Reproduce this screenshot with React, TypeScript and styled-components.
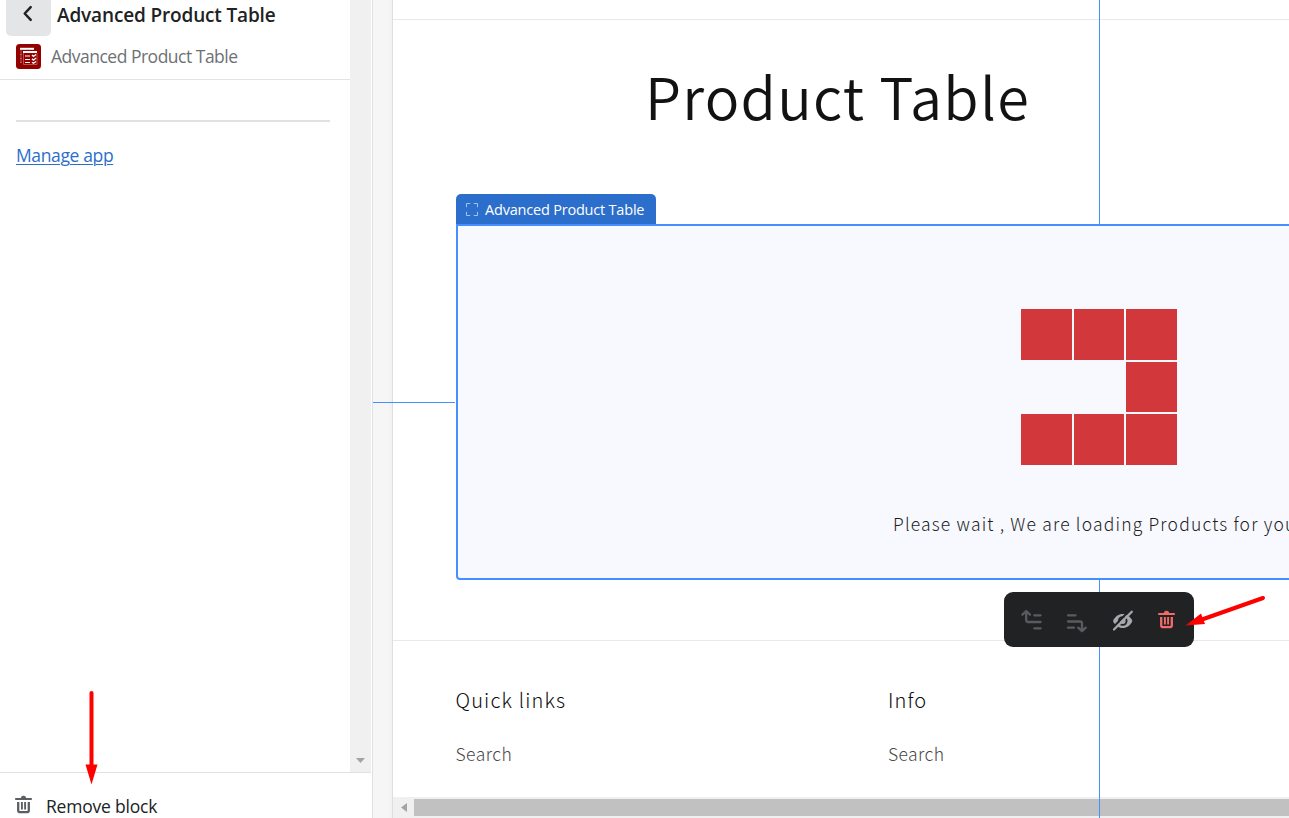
import React from "react";
import styled, { createGlobalStyle } from "styled-components";

const GlobalStyle = createGlobalStyle`
  * { box-sizing: border-box; }
  body { margin: 0; overflow: hidden; background: #fff; }
`;

const uiFont = `"Open Sans", "Noto Sans", sans-serif`;
const themeFont = `"Noto Sans CJK SC", "Noto Sans", sans-serif`;

const Editor = styled.div`
  position: relative;
  display: flex;
  width: 1289px;
  height: 818px;
  overflow: hidden;
  background: #fff;
`;

const Sidebar = styled.aside`
  display: flex;
  flex-direction: column;
  flex: none;
  width: 373px;
  height: 818px;
  border-right: 1px solid #e1e1e1;
  font-family: ${uiFont};
`;

const SidebarBody = styled.div`
  display: flex;
  height: 772px;
`;

const SidebarContent = styled.div`
  width: 350px;
`;

const ScrollTrack = styled.div`
  display: flex;
  flex-direction: column;
  justify-content: flex-end;
  align-items: center;
  width: 21px;
  padding-bottom: 9px;
  background: #f0f0f0;
`;

const SidebarHeader = styled.header`
  height: 80px;
  border-bottom: 1px solid #e1e3e5;
`;

const TitleRow = styled.div`
  display: flex;
  height: 36px;
  padding-left: 6px;
  gap: 6px;
`;

const BackButton = styled.button`
  display: flex;
  justify-content: center;
  width: 45px;
  height: 36px;
  padding: 5px 2px 0 0;
  border: 0;
  border-radius: 0 0 5px 5px;
  background: #e4e5e7;
`;

const Title = styled.h1`
  margin: 0;
  font-size: 19px;
  font-weight: 600;
  line-height: 30px;
  letter-spacing: -0.15px;
  white-space: nowrap;
  color: #202223;
`;

const AppRow = styled.div`
  display: flex;
  align-items: center;
  height: 41px;
  padding-left: 16px;
  gap: 10px;
`;

const AppName = styled.span`
  padding-bottom: 2px;
  font-size: 17.5px;
  line-height: 24px;
  letter-spacing: -0.5px;
  white-space: nowrap;
  color: #6d7175;
`;

const Divider = styled.hr`
  height: 2px;
  margin: 40px 20px 0 16px;
  border: 0;
  background: #e1e1e1;
`;

const ManageLink = styled.a`
  display: inline-block;
  margin: 21px 0 0 16px;
  font-size: 17.5px;
  line-height: 24px;
  letter-spacing: -0.37px;
  color: #2c6ecb;
  text-decoration: underline;
  text-decoration-thickness: 1px;
  text-underline-offset: 2px;
`;

const RemoveBar = styled.button`
  display: flex;
  align-items: flex-start;
  width: 371px;
  height: 46px;
  padding: 21px 0 0 13px;
  gap: 12px;
  border: 0;
  border-top: 1px solid #e1e1e1;
  background: #fff;
  overflow: hidden;
`;

const RemoveText = styled.span`
  font-family: ${uiFont};
  font-size: 17.5px;
  font-weight: 500;
  line-height: 24px;
  letter-spacing: -0.2px;
  white-space: nowrap;
  color: #202223;
`;

const Gutter = styled.div`
  flex: none;
  width: 20px;
  border-right: 1px solid #dedede;
  background: linear-gradient(90deg, #f6f6f6 15px, #efefef 20px);
`;

const Preview = styled.main`
  display: flex;
  flex-direction: column;
  flex: none;
  width: 896px;
  height: 818px;
  overflow: hidden;
  font-family: ${themeFont};
`;

const StoreHeader = styled.div`
  flex: none;
  height: 20px;
  border-bottom: 1px solid #e8e8e8;
`;

const PageTitle = styled.h2`
  flex: none;
  height: 174px;
  margin: 0;
  padding: 38px 0 0 252px;
  font-size: 57.5px;
  font-weight: 350;
  line-height: 74px;
  letter-spacing: 1.25px;
  white-space: nowrap;
  color: #121212;
`;

const BlockTag = styled.div`
  display: flex;
  align-items: center;
  flex: none;
  width: 200px;
  height: 30px;
  margin-left: 63px;
  padding-left: 10px;
  gap: 7px;
  border-radius: 5px 5px 0 0;
  background: #2c6ecb;
  color: #fff;
  font-family: ${uiFont};
  font-size: 14.5px;
  letter-spacing: -0.2px;
  white-space: nowrap;
`;

const Block = styled.section`
  flex: none;
  width: 900px;
  height: 356px;
  margin-left: 63px;
  padding-top: 83px;
  border: 2px solid #458fff;
  border-radius: 0 0 0 4px;
  background: #f7f9fe;
`;

const Loader = styled.div`
  display: grid;
  grid-template-columns: repeat(3, 50.5px);
  grid-auto-rows: 50.5px;
  gap: 2px;
  margin-left: 563.3px;
`;

const Cell = styled.i<{ $on: boolean }>`
  background: ${(p) => (p.$on ? "#d2373b" : "transparent")};
`;

const LoadingText = styled.p`
  margin: 46px 0 0 435px;
  font-size: 17.5px;
  font-weight: 300;
  line-height: 26px;
  letter-spacing: 1.18px;
  white-space: nowrap;
  color: #1c1c1e;
`;

const Spacer = styled.div`
  flex: none;
  height: 60px;
`;

const Footer = styled.footer`
  display: flex;
  flex: none;
  height: 157px;
  padding: 45px 0 0 62.5px;
  border-top: 1px solid #e8e8e8;
`;

const FooterColumn = styled.div`
  flex: none;
  width: 432.4px;
`;

const FooterHeading = styled.h3`
  margin: 0 0 27px;
  font-size: 20px;
  font-weight: 300;
  line-height: 28px;
  letter-spacing: 1.15px;
  color: #0c0c0c;
`;

const FooterLink = styled.a`
  display: block;
  font-size: 17.5px;
  font-weight: 300;
  line-height: 26px;
  letter-spacing: 0.45px;
  color: #484848;
`;

const HScroll = styled.div`
  display: flex;
  align-items: center;
  flex: none;
  height: 21px;
  padding-left: 8px;
  gap: 7px;
  background: #f0f0f0;
`;

const HThumb = styled.div`
  flex: 1;
  height: 17px;
  background: #c1c1c1;
`;

const VerticalGuide = styled.div<{ $top: number; $height: number }>`
  position: absolute;
  left: 1099px;
  top: ${(p) => p.$top}px;
  width: 1px;
  height: ${(p) => p.$height}px;
  background: #458fff;
`;

const HorizontalGuide = styled.div`
  position: absolute;
  left: 373px;
  top: 402px;
  width: 82px;
  height: 1px;
  background: #458fff;
`;

const Toolbar = styled.div`
  position: absolute;
  left: 1004px;
  top: 592px;
  display: flex;
  align-items: center;
  justify-content: space-between;
  width: 190px;
  height: 55px;
  padding: 0 17px 0 14.5px;
  border-radius: 9px;
  background: #202223;
`;

const Annotations = styled.svg`
  position: absolute;
  inset: 0;
  pointer-events: none;
`;

const TrashIcon = ({ color }: { color: string }) => (
  <svg width="21" height="21" viewBox="0 0 21 21" fill="none" stroke={color}>
    <path d="M3 5h15" strokeWidth="2.200" strokeLinecap="round" />
    <path d="M8.100 4.500a2.400 2.400 0 0 1 4.800 0z" fill={color} strokeWidth=".8" />
    <path d="M5.200 8v8.200a2 2 0 0 0 2 2h6.600a2 2 0 0 0 2-2V8" strokeWidth="2.300" />
    <path d="M8.900 8v7.500M12.100 8v7.500" strokeWidth="1.900" />
  </svg>
);

const MoveUpIcon = () => (
  <svg width="26" height="26" viewBox="0 0 26 26" fill="none" stroke="#595c5f" strokeWidth="2.300" strokeLinecap="round" strokeLinejoin="round">
    <path d="M3.400 7.600L7.200 4l3.800 3.600M7.200 4.600v8.400a2 2 0 0 0 2 2H21.600M15.300 8.300h6.300M15.300 21.300h6.300" />
  </svg>
);

const MoveDownIcon = () => (
  <svg width="26" height="26" viewBox="0 0 26 26" fill="none" stroke="#595c5f" strokeWidth="2.300" strokeLinecap="round" strokeLinejoin="round">
    <path d="M4 8.300h7.500M4 14.500h12a2 2 0 0 1 2 2V24M14.200 20.700L18 24.200l3.800-3.500M4 20.700h6" />
  </svg>
);

const HideIcon = () => (
  <svg width="26" height="26" viewBox="0 0 26 26" fill="none">
    <path d="M3 14C5 9.200 8.700 7 12.700 7s7.700 2.200 9.700 7c-2 4.800-5.700 7-9.700 7S5 18.800 3 14z" fill="#a6a8ab" />
    <circle cx="12.700" cy="14" r="4.800" fill="#202223" />
    <circle cx="12.700" cy="14" r="2.900" fill="#a6a8ab" />
    <path d="M2 21.700L19.500 3.500" stroke="#202223" strokeWidth="2.200" />
    <path d="M4 22.500L21.800 4.800" stroke="#a6a8ab" strokeWidth="2.300" strokeLinecap="round" />
  </svg>
);

const AppLogo = () => (
  <svg width="25" height="25" viewBox="0 0 25 25">
    <rect width="25" height="25" rx="3.500" fill="#930000" />
    <path d="M4 4.800h14" stroke="#fff" strokeWidth="2" />
    <path d="M7 8h14" stroke="#fff" strokeWidth="2" />
    <path d="M5 6v13M7.500 9v11.500H21V9M4 10.500h2M4 14.500h2M4 18.500h2" stroke="#c77676" strokeWidth=".7" fill="none" />
    <path d="M9 12h5M9 15.500h5M9 18.500h5" stroke="#fff" strokeWidth="1.200" />
    <path d="M16 11l1.500 1.500L20 10.500M16 14.700l1.500 1.500L20 14M16 18.200l1.500 1L20 17.500" stroke="#fff" strokeWidth="1.300" fill="none" />
  </svg>
);

const BlockIcon = () => (
  <svg width="12" height="13" viewBox="0 0 12 13" fill="none" stroke="#a7c3ea" strokeWidth="1">
    <path d="M.5 4.200V.5h3.700M7.800.5h3.700v3.700M11.500 8.800v3.700H7.800M4.200 12.500H.5V8.800" />
  </svg>
);

const cells = [true, true, true, false, false, true, true, true, true];

export default function App() {
  return (
    <Editor>
      <GlobalStyle />
      <Sidebar>
        <SidebarBody>
          <SidebarContent>
            <SidebarHeader>
              <TitleRow>
                <BackButton aria-label="Back">
                  <svg width="12" height="17" viewBox="0 0 12 17" fill="none" stroke="#202223" strokeWidth="2.500" strokeLinecap="round" strokeLinejoin="round">
                    <path d="M8.700 2.200L2.700 8.500l6 6.300" />
                  </svg>
                </BackButton>
                <Title>Advanced Product Table</Title>
              </TitleRow>
              <AppRow>
                <AppLogo />
                <AppName>Advanced Product Table</AppName>
              </AppRow>
            </SidebarHeader>
            <Divider />
            <ManageLink>Manage app</ManageLink>
          </SidebarContent>
          <ScrollTrack>
            <svg width="9" height="5" viewBox="0 0 9 5"><path d="M0 0h9L4.500 5z" fill="#a3a3a3" /></svg>
          </ScrollTrack>
        </SidebarBody>
        <RemoveBar>
          <TrashIcon color="#5c5f62" />
          <RemoveText>Remove block</RemoveText>
        </RemoveBar>
      </Sidebar>
      <Gutter />
      <Preview>
        <StoreHeader />
        <PageTitle>Product Table</PageTitle>
        <BlockTag>
          <BlockIcon />
          Advanced Product Table
        </BlockTag>
        <Block>
          <Loader>
            {cells.map((on, i) => <Cell key={i} $on={on} />)}
          </Loader>
          <LoadingText>Please wait , We are loading Products for you</LoadingText>
        </Block>
        <Spacer />
        <Footer>
          <FooterColumn>
            <FooterHeading>Quick links</FooterHeading>
            <FooterLink>Search</FooterLink>
          </FooterColumn>
          <FooterColumn>
            <FooterHeading>Info</FooterHeading>
            <FooterLink>Search</FooterLink>
          </FooterColumn>
        </Footer>
        <HScroll>
          <svg width="6" height="9" viewBox="0 0 6 9"><path d="M6 0v9L0 4.500z" fill="#a3a3a3" /></svg>
          <HThumb />
        </HScroll>
      </Preview>
      <HorizontalGuide />
      <VerticalGuide $top={0} $height={224} />
      <VerticalGuide $top={580} $height={238} />
      <Toolbar>
        <MoveUpIcon />
        <MoveDownIcon />
        <HideIcon />
        <TrashIcon color="#f36a6a" />
      </Toolbar>
      <Annotations width="1289" height="818" fill="red" stroke="red">
        <path d="M91.500 693v74" strokeWidth="4" strokeLinecap="round" />
        <path d="M85.500 764.500h12L91.500 784.500z" stroke="none" />
        <path d="M1263 598L1202 619.500" strokeWidth="4" strokeLinecap="round" />
        <path d="M1185.500 625.500L1201 613.500L1205 624z" stroke="none" />
      </Annotations>
    </Editor>
  );
}
